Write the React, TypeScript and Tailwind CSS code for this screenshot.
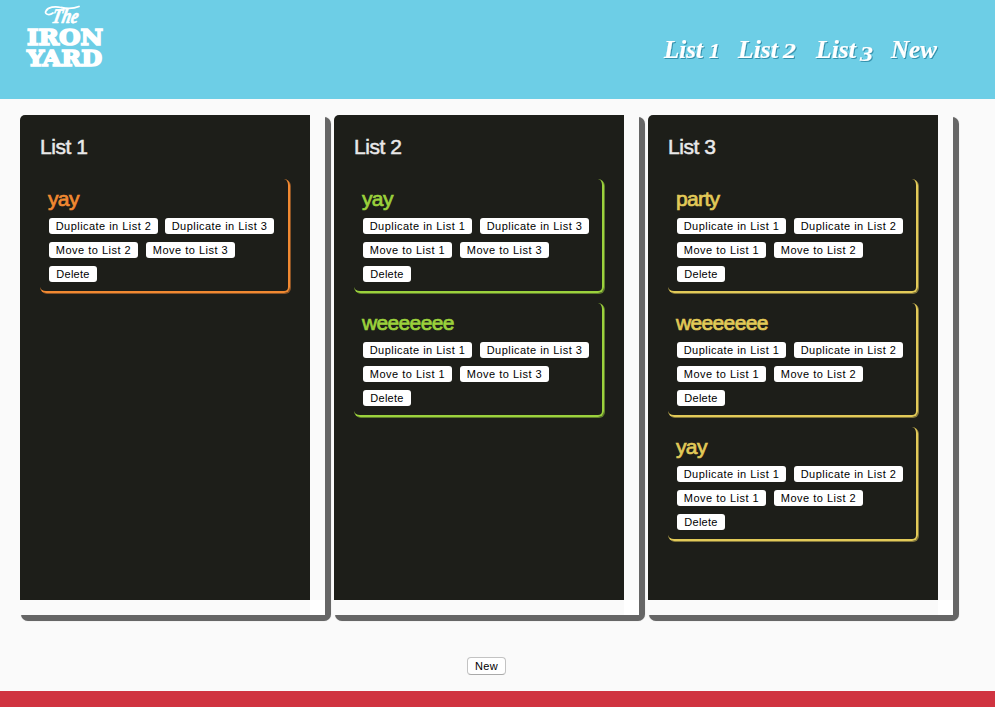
type Item = { name: string };
type List = { id: number; text: string; border: string; items: Item[] };

const lists: List[] = [
  {
    id: 1,
    text: "text-[#f18931]",
    border: "border-[#f18931] shadow-[1px_1px_0_#8a5326]",
    items: [{ name: "yay" }],
  },
  {
    id: 2,
    text: "text-[#9bd13c]",
    border: "border-[#9bd13c] shadow-[1px_1px_0_#5f7c2c]",
    items: [{ name: "yay" }, { name: "weeeeeee" }],
  },
  {
    id: 3,
    text: "text-[#e2ca58]",
    border: "border-[#e2ca58] shadow-[1px_1px_0_#82763a]",
    items: [{ name: "party" }, { name: "weeeeeee" }, { name: "yay" }],
  },
];

function Logo() {
  return (
    <svg className="ml-[20px] block h-[74px] w-[90px] fill-white stroke-white" viewBox="0 0 90 74">
      <path
        d="M33 13C29 16 24 14 26 11C28 7 35 6 41 7.5C48 9 53 9 59 6.5"
        fill="none"
        strokeWidth="1.8"
        strokeLinecap="round"
      />
      <text x="31" y="23" textLength="26" lengthAdjust="spacingAndGlyphs" strokeWidth="0.7" transform="translate(5 0) skewX(-12)" className="font-['Liberation_Serif',serif] text-[21px] font-bold italic">
        The
      </text>
      <text x="7" y="45" textLength="76" lengthAdjust="spacingAndGlyphs" strokeWidth="1.7" className="font-['DejaVu_Serif',serif] text-[23px] font-bold">
        IRON
      </text>
      <text x="7" y="66.3" textLength="75" lengthAdjust="spacingAndGlyphs" strokeWidth="1.7" className="font-['DejaVu_Serif',serif] text-[23px] font-bold">
        YARD
      </text>
    </svg>
  );
}

const navItems = [
  { label: "List", x: 14, w: 39, digit: "1", dx: 59, dy: 28, dw: 11 },
  { label: "List", x: 88, w: 40, digit: "2", dx: 133, dy: 28, dw: 13 },
  { label: "List", x: 166, w: 40, digit: "3", dx: 210, dy: 31, dw: 13 },
  { label: "New", x: 241, w: 46, digit: "", dx: 0, dy: 0, dw: 0 },
];

function Nav() {
  return (
    <nav className="ml-auto mr-[45px] pt-[30px]">
      <svg
        className="block h-[40px] w-[300px] fill-white stroke-white font-['Z003','URW_Chancery_L','Liberation_Serif',cursive] font-bold italic drop-shadow-[1px_1px_0px_rgba(20,110,140,0.65)]"
        viewBox="0 0 300 40"
      >
        {navItems.map((n) => (
          <g key={n.x} strokeWidth="0.2">
            <text x={n.x} y="28" textLength={n.w} lengthAdjust="spacingAndGlyphs" className="text-[25px]">
              {n.label}
            </text>
            {n.digit && (
              <text x={n.dx} y={n.dy} textLength={n.dw} lengthAdjust="spacingAndGlyphs" className="text-[22px]">
                {n.digit}
              </text>
            )}
          </g>
        ))}
      </svg>
    </nav>
  );
}

function Action({ label, className }: { label: string; className: string }) {
  return (
    <button className={`h-4 rounded-[3px] bg-white text-center text-[11px] leading-4 whitespace-nowrap text-black ${className}`}>
      {label}
    </button>
  );
}

function Card({ item, list }: { item: Item; list: List }) {
  const others = [1, 2, 3].filter((n) => n !== list.id);
  return (
    <article className={`h-[114px] w-[250px] rounded-[6px] border-r-2 border-b-2 pt-[7px] pl-[8px] ${list.border}`}>
      <h3 className={`h-[32px] text-[21px] leading-[25px] tracking-[-0.65px] [-webkit-text-stroke:0.7px] ${list.text}`}>{item.name}</h3>
      <div className="ml-px flex flex-col gap-2">
        <div className={list.id === 1 ? "flex gap-[7px]" : "flex gap-2"}>
          {others.map((n) => (
            <Action key={n} label={`Duplicate in List ${n}`} className="w-[109px] tracking-[0.46px]" />
          ))}
        </div>
        <div className="flex gap-2">
          {others.map((n) => (
            <Action key={n} label={`Move to List ${n}`} className="w-[89px] tracking-[0.5px]" />
          ))}
        </div>
        <div className="flex">
          <Action label="Delete" className="w-[48px] tracking-[0.25px]" />
        </div>
      </div>
    </article>
  );
}

function Column({ list }: { list: List }) {
  return (
    <section className="mt-[2px] ml-[1px] h-[504px] w-[310px] rounded-[7px] bg-[#666666] shadow-[0_0_1px_#bbbbbb]">
      <div className="-mt-[2px] -ml-[1px] grid h-[500px] w-[305px] grid-cols-[290px_15px] grid-rows-[485px_15px] rounded-tl-[5px] bg-[#fafafa]">
        <div className="rounded-tl-[5px] bg-[#1d1e19] px-5 pt-[18px]">
          <h2 className="h-[46px] text-[21px] leading-[28px] tracking-[-0.45px] text-[#e9e9e9] [-webkit-text-stroke:0.5px]">List {list.id}</h2>
          <div className="flex flex-col gap-[10px]">
            {list.items.map((item, i) => (
              <Card key={i} item={item} list={list} />
            ))}
          </div>
        </div>
        <div />
        <div />
        <div className="bg-white" />
      </div>
    </section>
  );
}

export default function App() {
  return (
    <div className="flex h-[707px] w-[995px] flex-col overflow-hidden bg-[#fafafa] font-['Liberation_Sans',sans-serif]">
      <header className="flex h-[99px] shrink-0 bg-[#6dcee6]">
        <Logo />
        <Nav />
      </header>
      <main className="flex gap-[3px] pt-4 pl-5">
        {lists.map((list) => (
          <Column key={list.id} list={list} />
        ))}
      </main>
      <div className="pt-9 pl-[467px]">
        <button className="block h-[18px] w-[39px] rounded-[4px] border border-[#c3c3c3] border-b-[#aaaaaa] bg-white text-[11px] leading-[16px] tracking-[0.35px] text-black">
          New
        </button>
      </div>
      <footer className="mt-auto h-4 shrink-0 bg-[#d03340]" />
    </div>
  );
}
